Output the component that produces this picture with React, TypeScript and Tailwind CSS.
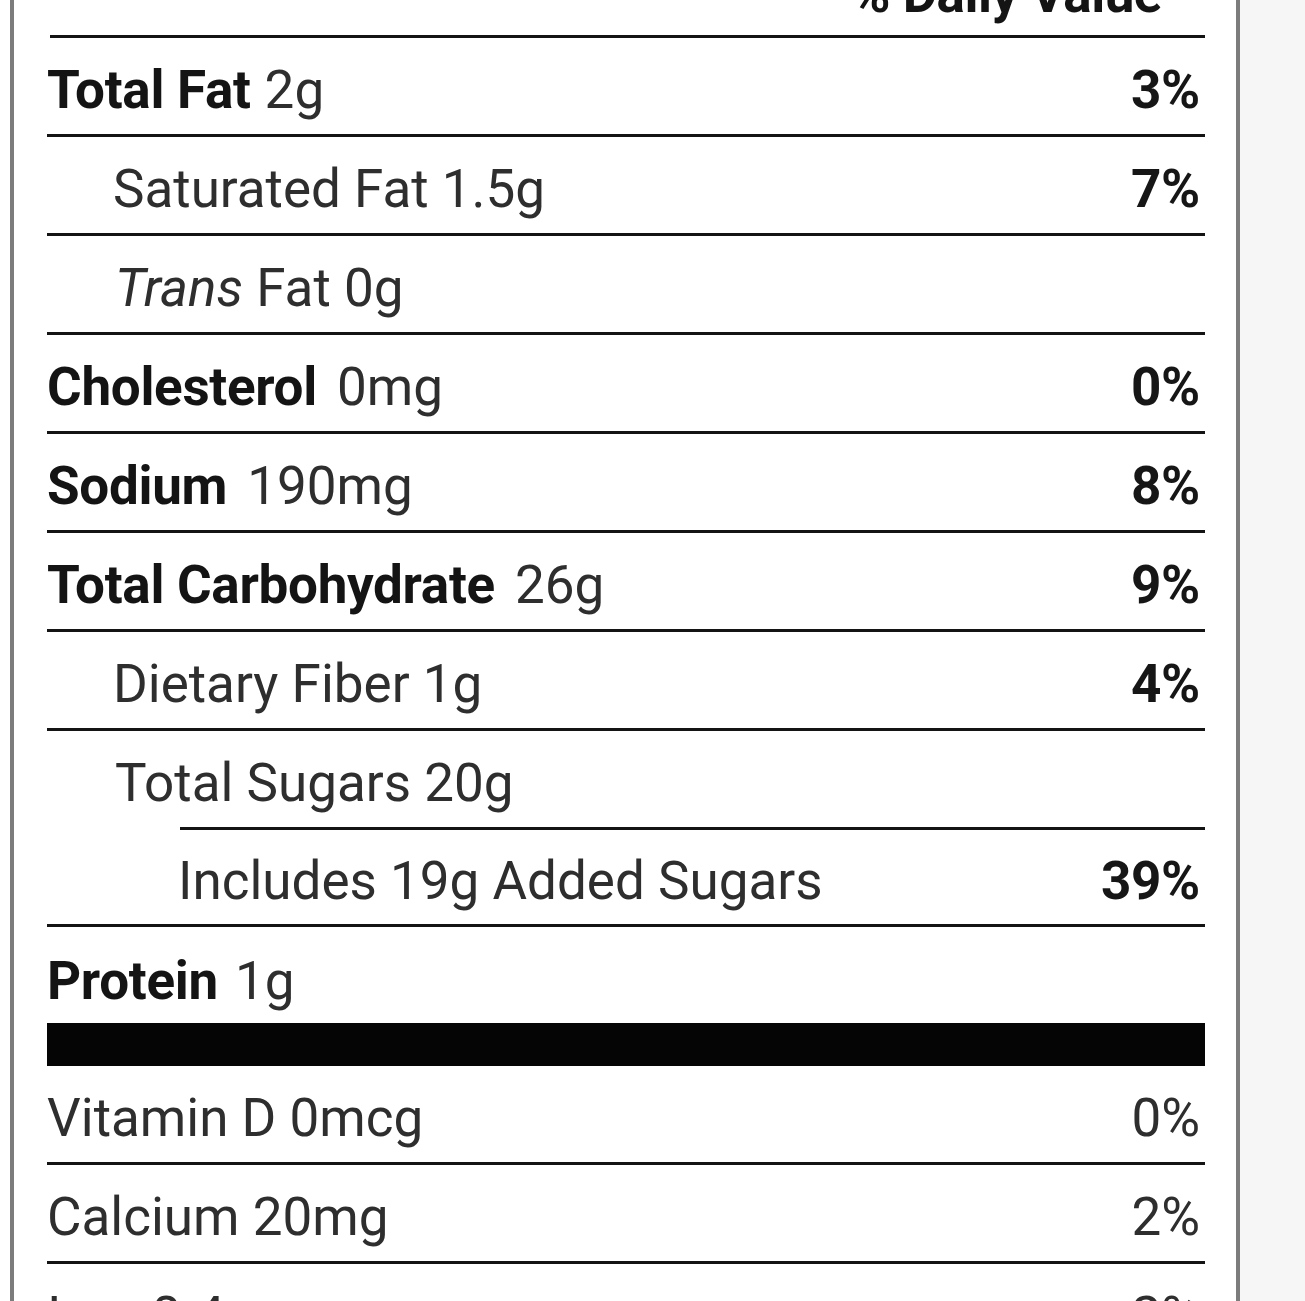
import clsx from "clsx";
import type { ReactNode } from "react";

type RowProps = {
  children: ReactNode;
  dv?: string;
  dvBold?: boolean;
  line?: boolean;
  className?: string;
};

function Row({ children, dv, dvBold = true, line = true, className }: RowProps) {
  return (
    <div
      className={clsx(
        "flex items-center justify-between pt-[11px] pr-[5px]",
        line ? "h-[99px] border-b-[3px] border-[#141414]" : "h-[96px]",
        className
      )}
    >
      <div className="flex items-baseline whitespace-nowrap">{children}</div>
      {dv && (
        <span
          className={clsx(
            dvBold ? "font-bold text-[#161616] tracking-[-0.3px]" : "font-normal text-[#2e2e2e]"
          )}
        >
          {dv}
        </span>
      )}
    </div>
  );
}

function Name({ children }: { children: ReactNode }) {
  return <span className="font-bold text-[#141414] tracking-[-0.3px]">{children}</span>;
}

function Amount({ children, gap = "ml-[20px]" }: { children: ReactNode; gap?: string }) {
  return <span className={clsx("text-[#2e2e2e]", gap)}>{children}</span>;
}

export default function App() {
  return (
    <div className="min-h-screen w-full overflow-hidden bg-[#f6f6f6] font-['Roboto','Liberation_Sans',sans-serif] text-[53px] leading-normal">
      <div className="flex">
        <div className="w-[10px] shrink-0 bg-white" />
        <div className="w-[1230px] shrink-0 border-x-4 border-[#7c7c7c] bg-white pl-[33px] pr-[31px]">
          <div className="-mt-[45px] ml-[3px] border-b-[3px] border-[#141414] pr-[43px] text-right">
            <span className="font-bold tracking-[-0.5px] text-[#141414]">% Daily Value</span>
          </div>

          <Row dv="3%">
            <Name>Total Fat</Name>
            <Amount gap="ml-[14px]">2g</Amount>
          </Row>
          <Row dv="7%">
            <span className="ml-[66px] text-[#2e2e2e]">Saturated Fat 1.5g</span>
          </Row>
          <Row>
            <span className="ml-[68px] text-[#2e2e2e]">
              <i>Trans</i> Fat 0g
            </span>
          </Row>
          <Row dv="0%">
            <Name>Cholesterol</Name>
            <Amount>0mg</Amount>
          </Row>
          <Row dv="8%">
            <Name>Sodium</Name>
            <Amount>190mg</Amount>
          </Row>
          <Row dv="9%">
            <Name>Total Carbohydrate</Name>
            <Amount>26g</Amount>
          </Row>
          <Row dv="4%">
            <span className="ml-[66px] text-[#2e2e2e]">Dietary Fiber 1g</span>
          </Row>
          <Row line={false}>
            <span className="ml-[68px] text-[#2e2e2e]">Total Sugars 20g</span>
          </Row>
          <div className="border-b-[3px] border-[#141414]">
            <Row line={false} dv="39%" className="ml-[133px] h-[97px] border-t-[3px] border-[#141414]">
              <span className="-ml-[2px] text-[#2e2e2e]">Includes 19g Added Sugars</span>
            </Row>
          </div>
          <Row line={false} className="h-[90px] pt-[14px]">
            <Name>Protein</Name>
            <Amount gap="ml-[17px]">1g</Amount>
          </Row>
          <div className="h-[43px] bg-[#050505]" />
          <Row dv="0%" dvBold={false}>
            <span className="text-[#2e2e2e]">Vitamin D 0mcg</span>
          </Row>
          <Row dv="2%" dvBold={false}>
            <span className="text-[#2e2e2e]">Calcium 20mg</span>
          </Row>
          <Row dv="2%" dvBold={false}>
            <span className="text-[#2e2e2e]">Iron 0.4mg</span>
          </Row>
        </div>
      </div>
    </div>
  );
}
